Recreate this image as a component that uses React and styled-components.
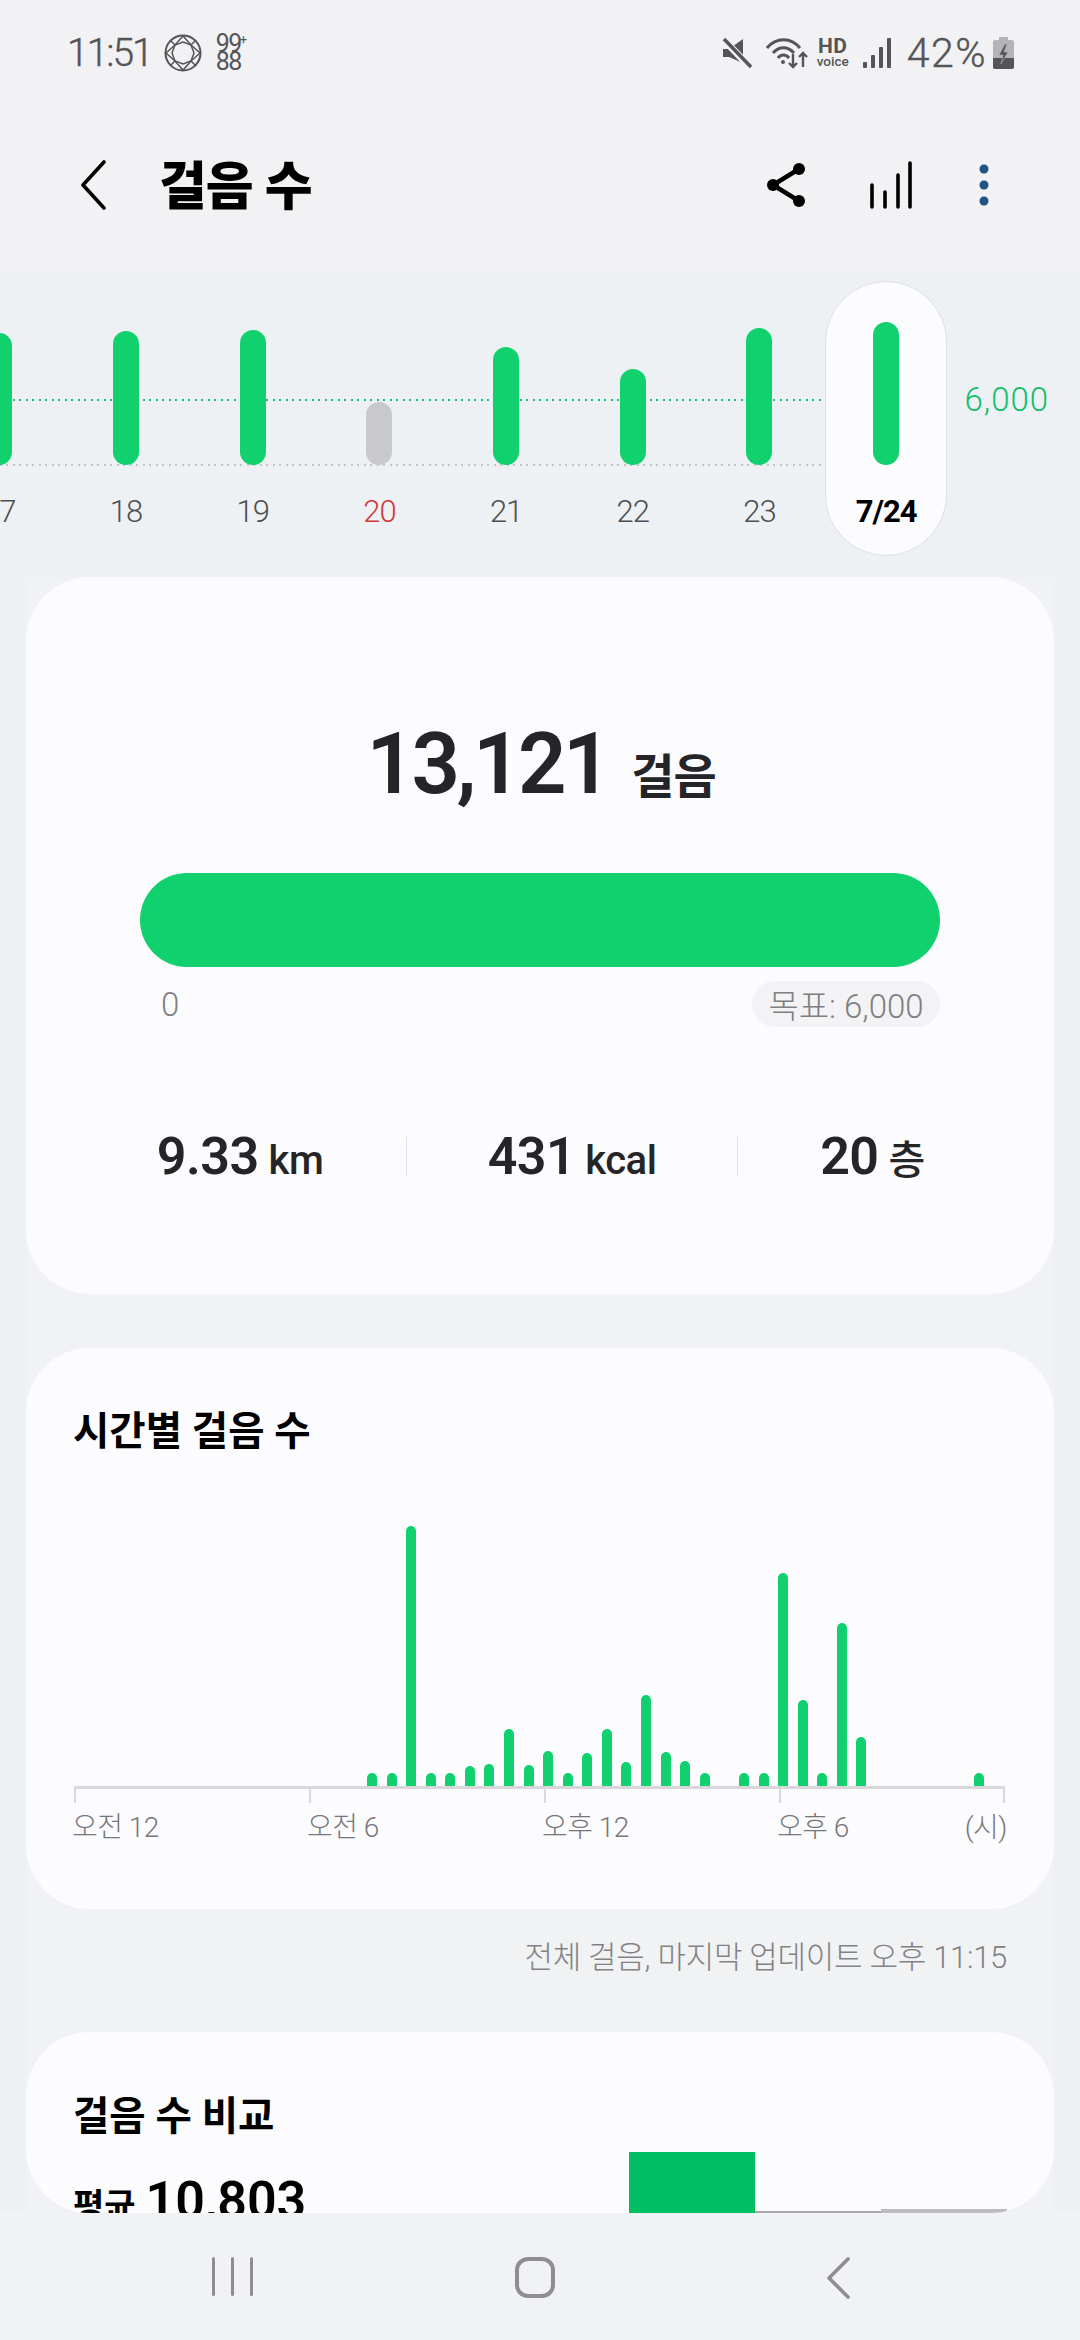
import React from 'react';
import styled, { createGlobalStyle } from 'styled-components';

const sans = `Roboto, "Noto Sans CJK KR", sans-serif`;
const green = '#11d16f';

const days = [
  { label: '17', top: 333 },
  { label: '18', top: 331 },
  { label: '19', top: 330 },
  { label: '20', top: 402, off: true },
  { label: '21', top: 347 },
  { label: '22', top: 369 },
  { label: '23', top: 328 },
  { label: '7/24', top: 322, selected: true },
];

// 30 minute bins, height in px
const hourly = [
  0, 0, 0, 0, 0, 0, 0, 0, 0, 0, 0, 0, 0, 0, 0, 13, 13, 260, 13, 13, 20, 22, 57, 21,
  35, 13, 33, 57, 24, 91, 34, 25, 13, 0, 13, 13, 213, 86, 13, 163, 49, 0, 0, 0, 0, 0, 13, 0,
];

const GlobalStyle = createGlobalStyle`
  html, body { margin: 0; padding: 0; background: #f1f2f4; }
  * { box-sizing: border-box; }
`;

const Page = styled.div`
  width: 1080px;
  height: 2340px;
  display: flex;
  flex-direction: column;
  overflow: hidden;
  font-family: ${sans};
  background: #f1f2f4;
`;

const StatusBar = styled.div`
  height: 100px;
  flex: none;
  display: flex;
  justify-content: space-between;
  align-items: flex-start;
  padding: 34px 66px 0 67px;
  background: #f2f2f4;
  color: #555557;
`;
const StatusGroup = styled.div`
  display: flex;
  align-items: center;
  height: 37px;
`;
const StatusText = styled.span`
  font-size: ${(p) => p.$size}px;
  font-weight: 300;
  line-height: 37px;
  padding-top: 2px;
  letter-spacing: ${(p) => p.$spacing};
  -webkit-text-stroke: 0.4px #555557;
`;
const CountIcon = styled.div`
  margin-left: 14px;
  display: flex;
  flex-direction: column;
  font-size: 25px;
  line-height: 17.5px;
  letter-spacing: -1.5px;
  width: 26px;
  position: relative;
  font-weight: 400;
`;
const Plus = styled.span`
  position: absolute;
  left: 24px;
  top: -4px;
  font-size: 13px;
  letter-spacing: 0;
`;
const HdIcon = styled.div`
  width: 34px;
  margin: 0 13px 0 8px;
  display: flex;
  flex-direction: column;
  align-items: center;
  font-weight: 700;
`;
const HdTop = styled.span`
  font-size: 21px;
  line-height: 17px;
  letter-spacing: 0.5px;
`;
const HdBottom = styled.span`
  font-size: 13.5px;
  line-height: 13px;
  font-weight: 500;
`;

const AppBar = styled.div`
  height: 170px;
  flex: none;
  display: flex;
  align-items: center;
  padding: 0 0 0 80px;
  background: #f2f2f4;
`;
const Title = styled.h1`
  margin: 5px 0 0 53px;
  font-size: 52px;
  line-height: 60px;
  font-weight: 900;
  color: #000;
  flex: 1;
  letter-spacing: -1px;
`;
const Actions = styled.div`
  display: flex;
  align-items: center;
  padding-right: 91px;
`;

const Scroller = styled.div`
  flex: 1;
  min-height: 0;
  overflow: hidden;
  background: #edf1f3;
`;

const Strip = styled.div`
  position: relative;
  height: 307px;
  padding: 11px 0 0 0;
  display: flex;
  align-items: flex-start;
  margin-left: -64px;
`;
const Rule = styled.div`
  position: absolute;
  left: 64px;
  width: 821px;
  height: 2px;
  top: ${(p) => p.$top}px;
  background: repeating-linear-gradient(90deg, ${(p) => p.$color} 0 2px, transparent 2px 6.5px);
`;
const DayColumn = styled.div`
  position: relative;
  flex: none;
  width: 122px;
  height: 275px;
  margin: 0 2.35px;
  display: flex;
  flex-direction: column;
  align-items: center;
  border-radius: 61px;
  border: 1px solid ${(p) => (p.$selected ? '#dedfe1' : 'transparent')};
  background: ${(p) => (p.$selected ? '#fcfcfe' : 'transparent')};
`;
const BarSlot = styled.div`
  height: 183px;
  flex: none;
  display: flex;
  align-items: flex-end;
`;
const DayBar = styled.div`
  width: 26px;
  height: ${(p) => p.$height}px;
  border-radius: 13px;
  background: ${(p) => (p.$off ? '#c9c9cb' : green)};
`;
const DayLabel = styled.div`
  margin-top: 27px;
  font-size: 31px;
  line-height: 40px;
  letter-spacing: -1px;
  white-space: nowrap;
  font-weight: ${(p) => (p.$selected ? 700 : 300)};
  color: ${(p) => (p.$selected ? '#000' : p.$off ? '#cf3a3a' : '#4e4e52')};
`;
const GoalLabel = styled.div`
  margin: 99px 0 0 15px;
  font-size: 33px;
  line-height: 40px;
  font-weight: 300;
  letter-spacing: 1px;
  color: #0fbf6a;
  white-space: nowrap;
`;

const Cards = styled.div`
  margin: 0 26px;
  background: #f1f2f4;
  display: flex;
  flex-direction: column;
`;
const Card = styled.section`
  height: ${(p) => p.$height}px;
  flex: none;
  border-radius: 64px;
  background: #fcfcfe;
  overflow: hidden;
`;
const SummaryCard = styled(Card)`
  padding-top: 137px;
  display: flex;
  flex-direction: column;
`;
const Headline = styled.div`
  height: 100px;
  display: flex;
  justify-content: center;
  align-items: baseline;
  color: #252527;
  line-height: 100px;
  padding-left: 2px;
`;
const BigNumber = styled.span`
  font-size: 85px;
  font-weight: 600;
  letter-spacing: -3.5px;
`;
const BigUnit = styled.span`
  margin-left: 23px;
  font-size: 47px;
  font-weight: 700;
  letter-spacing: -1px;
`;
const Progress = styled.div`
  margin: 59px 114px 0;
  height: 94px;
  border-radius: 47px;
  background: ${green};
`;
const Scale = styled.div`
  margin: 14px 114px 0;
  display: flex;
  justify-content: space-between;
  align-items: center;
  font-size: 33px;
  font-weight: 300;
  color: #7f7f82;
`;
const ScaleStart = styled.span`
  padding-left: 21px;
`;
const GoalPill = styled.span`
  width: 188px;
  height: 46px;
  border-radius: 23px;
  background: #f3f3f5;
  display: flex;
  align-items: center;
  justify-content: center;
  white-space: nowrap;
  letter-spacing: 0;
`;
const Stats = styled.div`
  margin: 100px 0 0 48px;
  height: 60px;
  display: grid;
  grid-template-columns: 332px 331px 270px;
  align-items: center;
`;
const Stat = styled.div`
  height: 40px;
  display: flex;
  justify-content: center;
  align-items: baseline;
  line-height: 40px;
  color: #252527;
  white-space: nowrap;
  border-left: ${(p) => (p.$divider ? '1px solid #e3e3e5' : 'none')};
`;
const StatValue = styled.span`
  font-size: 52px;
  font-weight: 600;
  letter-spacing: -0.5px;
`;
const StatUnit = styled.span`
  margin-left: 10px;
  font-size: 40px;
  font-weight: 500;
  letter-spacing: -0.5px;
`;

const HourlyCard = styled(Card)`
  margin-top: 54px;
  padding-top: 63px;
`;
const CardTitle = styled.h2`
  margin: 0 0 0 47px;
  font-size: 39.5px;
  line-height: 42px;
  font-weight: 700;
  color: #000;
`;
const HourBars = styled.div`
  margin: 33px 0 0 42.5px;
  height: 300px;
  display: grid;
  grid-template-columns: repeat(48, 19.58px);
  justify-items: center;
  align-items: end;
`;
const HourBar = styled.div`
  width: 10px;
  height: ${(p) => p.$height}px;
  border-radius: 5px 5px 0 0;
  background: ${green};
`;
const Axis = styled.div`
  margin-left: 48px;
  width: 931px;
  display: flex;
  border-top: 3px solid #d9d9db;
`;
const AxisTick = styled.div`
  flex: ${(p) => (p.$last ? '1' : 'none')};
  width: 235px;
  height: 14px;
  border-left: 2px solid #d9d9db;
  border-right: ${(p) => (p.$last ? '2px solid #d9d9db' : 'none')};
`;
const AxisLabels = styled.div`
  margin: 7px 0 0 46px;
  width: 935px;
  display: grid;
  grid-template-columns: 235px 235px 235px 1fr auto;
  font-size: 28px;
  line-height: 36px;
  font-weight: 300;
  color: #77777b;
  letter-spacing: -0.5px;
`;

const Footnote = styled.div`
  height: 123px;
  padding: 29px 47px 0 0;
  text-align: right;
  font-size: 31px;
  line-height: 40px;
  font-weight: 300;
  color: #828285;
  letter-spacing: -0.3px;
`;

const CompareCard = styled(Card)`
  padding-top: 64px;
  display: flex;
  flex-direction: column;
`;
const CompareRow = styled.div`
  flex: 1;
  min-height: 0;
  display: flex;
  justify-content: space-between;
  padding: 0 47px;
`;
const Average = styled.div`
  margin-top: 33px;
  display: flex;
  align-items: baseline;
  height: 60px;
  line-height: 60px;
  color: #000;
  font-weight: 700;
`;
const AverageLabel = styled.span`
  font-size: 34px;
  margin-right: 10px;
`;
const AverageValue = styled.span`
  font-size: 52px;
  font-weight: 600;
`;
const CompareBars = styled.div`
  display: flex;
  align-items: flex-end;
`;
const CompareBar = styled.div`
  width: 126px;
  height: ${(p) => p.$height}px;
  background: ${(p) => p.$color};
`;

const NavBar = styled.div`
  height: 127px;
  flex: none;
  background: #f1f2f4;
  padding: 44px 0 0 212px;
  display: flex;
  align-items: flex-start;
`;
const NavRecents = styled.div`
  width: 41px;
  height: 41px;
  display: flex;
  justify-content: space-between;
`;
const NavLine = styled.span`
  width: 3px;
  height: 39px;
  border-radius: 2px;
  background: #8e8e90;
`;
const NavHome = styled.div`
  margin-left: 262px;
  width: 40px;
  height: 41px;
  border: 4px solid #8e8e90;
  border-radius: 13px;
`;
const NavBack = styled.div`
  margin-left: 271px;
`;

const GemIcon = () => (
  <svg width="38" height="38" viewBox="0 0 38 38" fill="none" stroke="#555557" strokeWidth="1.5" style={{ marginLeft: 12 }}>
    <circle cx="19" cy="19" r="17.5" strokeWidth="2" />
    <path d="M19 8l8 3 3 8-3 8-8 3-8-3-3-8 3-8z" />
    <path d="M19 2l-8 9-9 8 9 8 8 9 8-9 9-8-9-8z" />
    <path d="M6 6l5 5M32 6l-5 5M6 32l5-5M32 32l-5-5" />
  </svg>
);

const MuteIcon = () => (
  <svg width="31" height="30" viewBox="0 0 31 30" fill="#555557">
    <path d="M1 11h6L21 1v24L7 19H1z" />
    <path d="M2 2l26 27" stroke="#f2f2f4" strokeWidth="7" />
    <path d="M2 1l27 28" stroke="#555557" strokeWidth="3.5" />
  </svg>
);

const WifiIcon = () => (
  <svg width="42" height="32" viewBox="0 0 42 32" fill="none" stroke="#555557" strokeWidth="3" style={{ marginLeft: 13 }}>
    <path d="M1 11C10 0 25 0 34 11" />
    <path d="M7 16C13 9 22 9 28 16" />
    <path d="M12 21C15 17 20 17 23 21" />
    <circle cx="17" cy="25" r="2" fill="#555557" stroke="none" />
    <path d="M27 17v13M23 26l4 4 4-4" strokeWidth="2.4" />
    <path d="M37 30V16M33 20l4-4 4 4" strokeWidth="2.4" />
  </svg>
);

const CellIcon = () => (
  <svg width="28" height="30" viewBox="0 0 28 30" fill="#555557" style={{ marginRight: 16 }}>
    <rect x="0" y="24" width="4" height="6" rx="1" />
    <rect x="8" y="17" width="4" height="13" rx="1" />
    <rect x="16" y="9" width="4" height="21" rx="1" />
    <rect x="24" y="0" width="4" height="30" rx="1" />
  </svg>
);

const BatteryIcon = () => (
  <svg width="21" height="32" viewBox="0 0 21 32" style={{ marginLeft: 6 }}>
    <path d="M6 0h9v3h4a2 2 0 0 1 2 2v25a2 2 0 0 1-2 2H2a2 2 0 0 1-2-2V5a2 2 0 0 1 2-2h4z" fill="#b4b4b6" />
    <path d="M0 21h21v9a2 2 0 0 1-2 2H2a2 2 0 0 1-2-2z" fill="#555557" />
    <path d="M12 7l-6 11h4l-2 9 7-12h-4l3-8z" fill="#555557" stroke="#b4b4b6" strokeWidth="0.6" />
  </svg>
);

const BackIcon = () => (
  <svg width="26" height="50" viewBox="0 0 26 50" fill="none" stroke="#000" strokeWidth="3.6" strokeLinecap="round" strokeLinejoin="round">
    <path d="M24 2L3 25l21 23" />
  </svg>
);

const ShareIcon = () => (
  <svg width="38" height="44" viewBox="0 0 38 44" style={{ marginRight: 64 }}>
    <path d="M32 6L6 22l26 16" fill="none" stroke="#000" strokeWidth="4.5" />
    <circle cx="32" cy="6" r="6" />
    <circle cx="6" cy="22" r="6" />
    <circle cx="32" cy="38" r="6" />
  </svg>
);

const ChartIcon = () => (
  <svg width="44" height="48" viewBox="0 0 44 48" fill="none" stroke="#000" strokeWidth="3.6" strokeLinecap="round" style={{ marginRight: 66 }}>
    <path d="M3 46V24M16 46V31M29 46V14M41 46V2" />
  </svg>
);

const MoreIcon = () => (
  <svg width="10" height="42" viewBox="0 0 10 42" fill="#1f5585">
    <circle cx="5" cy="5" r="4.5" />
    <circle cx="5" cy="21" r="4.5" />
    <circle cx="5" cy="37" r="4.5" />
  </svg>
);

const NavBackIcon = () => (
  <svg width="24" height="42" viewBox="0 0 24 42" fill="none" stroke="#8e8e90" strokeWidth="3.6" strokeLinecap="round" strokeLinejoin="round">
    <path d="M22 2L3 21l19 19" />
  </svg>
);

export default function App() {
  return (
    <Page>
      <GlobalStyle />
      <StatusBar>
        <StatusGroup>
          <StatusText $size={39} $spacing="-2px">11:51</StatusText>
          <GemIcon />
          <CountIcon>
            <span>99</span>
            <span>88</span>
            <Plus>+</Plus>
          </CountIcon>
        </StatusGroup>
        <StatusGroup>
          <MuteIcon />
          <WifiIcon />
          <HdIcon>
            <HdTop>HD</HdTop>
            <HdBottom>voice</HdBottom>
          </HdIcon>
          <CellIcon />
          <StatusText $size={41} $spacing="1.5px">42%</StatusText>
          <BatteryIcon />
        </StatusGroup>
      </StatusBar>
      <AppBar>
        <BackIcon />
        <Title>걸음 수</Title>
        <Actions>
          <ShareIcon />
          <ChartIcon />
          <MoreIcon />
        </Actions>
      </AppBar>
      <Scroller>
        <Strip>
          <Rule $top={129} $color="#12c46e" />
          <Rule $top={194} $color="#c4c4c6" />
          {days.map((d) => (
            <DayColumn key={d.label} $selected={d.selected}>
              <BarSlot>
                <DayBar $height={465 - d.top} $off={d.off} />
              </BarSlot>
              <DayLabel $selected={d.selected} $off={d.off}>
                {d.label}
              </DayLabel>
            </DayColumn>
          ))}
          <GoalLabel>6,000</GoalLabel>
        </Strip>
        <Cards>
          <SummaryCard $height={717}>
            <Headline>
              <BigNumber>13,121</BigNumber>
              <BigUnit>걸음</BigUnit>
            </Headline>
            <Progress />
            <Scale>
              <ScaleStart>0</ScaleStart>
              <GoalPill>목표: 6,000</GoalPill>
            </Scale>
            <Stats>
              <Stat>
                <StatValue>9.33</StatValue>
                <StatUnit>km</StatUnit>
              </Stat>
              <Stat $divider>
                <StatValue>431</StatValue>
                <StatUnit>kcal</StatUnit>
              </Stat>
              <Stat $divider>
                <StatValue>20</StatValue>
                <StatUnit>층</StatUnit>
              </Stat>
            </Stats>
          </SummaryCard>
          <HourlyCard $height={561}>
            <CardTitle>시간별 걸음 수</CardTitle>
            <HourBars>
              {hourly.map((h, idx) => (
                <HourBar key={idx} $height={h} />
              ))}
            </HourBars>
            <Axis>
              <AxisTick />
              <AxisTick />
              <AxisTick />
              <AxisTick $last />
            </Axis>
            <AxisLabels>
              <span>오전 12</span>
              <span>오전 6</span>
              <span>오후 12</span>
              <span>오후 6</span>
              <span>(시)</span>
            </AxisLabels>
          </HourlyCard>
          <Footnote>전체 걸음, 마지막 업데이트 오후 11:15</Footnote>
          <CompareCard $height={181}>
            <CardTitle>걸음 수 비교</CardTitle>
            <CompareRow>
              <Average>
                <AverageLabel>평균</AverageLabel>
                <AverageValue>10,803</AverageValue>
              </Average>
              <CompareBars>
                <CompareBar $height={61} $color="#00bf63" />
                <CompareBar $height={2} $color="#a9a9ab" />
                <CompareBar $height={4} $color="#bcbcbe" />
              </CompareBars>
            </CompareRow>
          </CompareCard>
        </Cards>
      </Scroller>
      <NavBar>
        <NavRecents>
          <NavLine />
          <NavLine />
          <NavLine />
        </NavRecents>
        <NavHome />
        <NavBack>
          <NavBackIcon />
        </NavBack>
      </NavBar>
    </Page>
  );
}
